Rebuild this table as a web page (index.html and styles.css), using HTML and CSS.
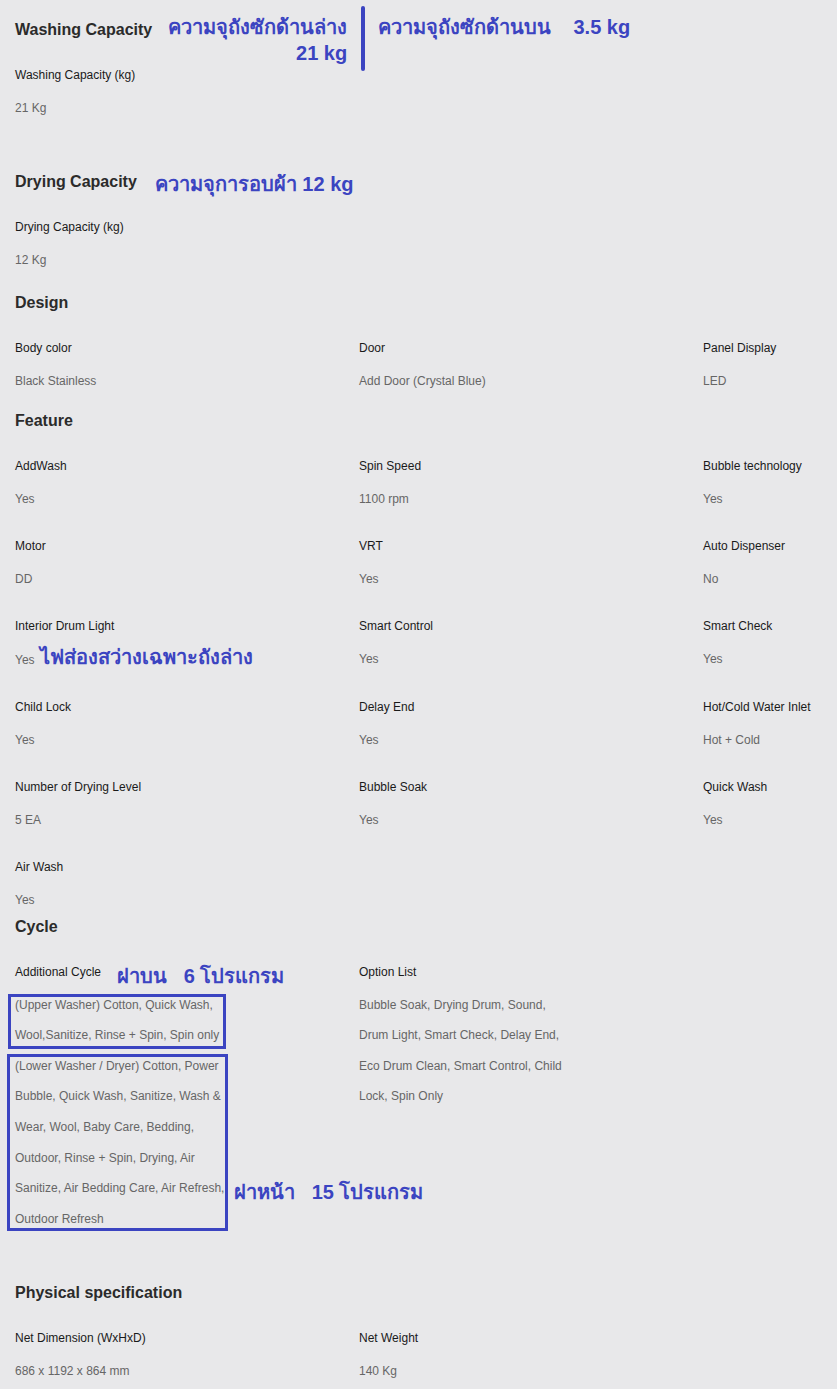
FILE: index.html
```html
<!DOCTYPE html>
<html lang="en">
<head>
<meta charset="utf-8">
<title>Specifications</title>
<link rel="stylesheet" href="styles.css">
</head>
<body>
<div class="page">

  <section class="spec spec--gap-lg">
    <div class="spec-head">
      <h2 class="spec-title">Washing Capacity</h2>
      <div class="note note--stack">ความจุถังซักด้านล่าง<br>21 kg</div>
      <span class="note-bar"></span>
      <div class="note note--upper">ความจุถังซักด้านบน    3.5 kg</div>
    </div>
    <div class="spec-grid">
      <div class="item"><div class="label">Washing Capacity (kg)</div><div class="value">21 Kg</div></div>
    </div>
  </section>

  <section class="spec spec--gap-md">
    <div class="spec-head">
      <h2 class="spec-title">Drying Capacity</h2>
      <div class="note note--dry">ความจุการอบผ้า 12 kg</div>
    </div>
    <div class="spec-grid">
      <div class="item"><div class="label">Drying Capacity (kg)</div><div class="value">12 Kg</div></div>
    </div>
  </section>

  <section class="spec spec--gap-sm">
    <div class="spec-head"><h2 class="spec-title">Design</h2></div>
    <div class="spec-grid">
      <div class="item"><div class="label">Body color</div><div class="value">Black Stainless</div></div>
      <div class="item"><div class="label">Door</div><div class="value">Add Door (Crystal Blue)</div></div>
      <div class="item"><div class="label">Panel Display</div><div class="value">LED</div></div>
    </div>
  </section>

  <section class="spec spec--gap-0">
    <div class="spec-head"><h2 class="spec-title">Feature</h2></div>
    <div class="spec-grid">
      <div class="item"><div class="label">AddWash</div><div class="value">Yes</div></div>
      <div class="item"><div class="label">Spin Speed</div><div class="value">1100 rpm</div></div>
      <div class="item"><div class="label">Bubble technology</div><div class="value">Yes</div></div>
      <div class="item"><div class="label">Motor</div><div class="value">DD</div></div>
      <div class="item"><div class="label">VRT</div><div class="value">Yes</div></div>
      <div class="item"><div class="label">Auto Dispenser</div><div class="value">No</div></div>
      <div class="item"><div class="label">Interior Drum Light</div><div class="value">Yes <span class="note note--inline">ไฟส่องสว่างเฉพาะถังล่าง</span></div></div>
      <div class="item"><div class="label">Smart Control</div><div class="value">Yes</div></div>
      <div class="item"><div class="label">Smart Check</div><div class="value">Yes</div></div>
      <div class="item"><div class="label">Child Lock</div><div class="value">Yes</div></div>
      <div class="item"><div class="label">Delay End</div><div class="value">Yes</div></div>
      <div class="item"><div class="label">Hot/Cold Water Inlet</div><div class="value">Hot + Cold</div></div>
      <div class="item"><div class="label">Number of Drying Level</div><div class="value">5 EA</div></div>
      <div class="item"><div class="label">Bubble Soak</div><div class="value">Yes</div></div>
      <div class="item"><div class="label">Quick Wash</div><div class="value">Yes</div></div>
      <div class="item"><div class="label">Air Wash</div><div class="value">Yes</div></div>
    </div>
  </section>

  <section class="spec spec--gap-cycle">
    <div class="spec-head"><h2 class="spec-title">Cycle</h2></div>
    <div class="spec-grid">
      <div class="item">
        <div class="label label--note">Additional Cycle <span class="note note--label">ฝาบน   6 โปรแกรม</span></div>
        <div class="cycle-box cycle-box--upper">
          <div class="value value--wrap value--upper">(Upper Washer) Cotton, Quick Wash, Wool,Sanitize, Rinse + Spin, Spin only</div>
        </div>
        <div class="cycle-row">
          <div class="cycle-box cycle-box--lower">
            <div class="value value--wrap value--lower">(Lower Washer / Dryer) Cotton, Power Bubble, Quick Wash, Sanitize, Wash &amp; Wear, Wool, Baby Care, Bedding, Outdoor, Rinse + Spin, Drying, Air Sanitize, Air Bedding Care, Air Refresh, Outdoor Refresh</div>
          </div>
          <div class="note note--front">ฝาหน้า   15 โปรแกรม</div>
        </div>
      </div>
      <div class="item"><div class="label">Option List</div><div class="value value--wrap">Bubble Soak, Drying Drum, Sound, Drum Light, Smart Check, Delay End, Eco Drum Clean, Smart Control, Child Lock, Spin Only</div></div>
    </div>
  </section>

  <section class="spec">
    <div class="spec-head"><h2 class="spec-title">Physical specification</h2></div>
    <div class="spec-grid">
      <div class="item"><div class="label">Net Dimension (WxHxD)</div><div class="value">686 x 1192 x 864 mm</div></div>
      <div class="item"><div class="label">Net Weight</div><div class="value">140 Kg</div></div>
    </div>
  </section>

</div>
</body>
</html>
```

FILE: styles.css
```css
html, body {
  margin: 0;
  padding: 0;
  background: #e8e8ea;
}

body {
  font-family: "Liberation Sans", Arial, "Noto Sans", sans-serif;
}

.page {
  padding: 18px 0 20px 15px;
}

.spec-head {
  display: flex;
  align-items: flex-start;
  height: 24px;
  margin-bottom: 23px;
}

.spec-title {
  margin: 0;
  font-size: 16px;
  line-height: 24px;
  font-weight: 700;
  color: #2b2b2b;
  white-space: nowrap;
}

.spec-grid {
  display: grid;
  grid-template-columns: 344px 344px 1fr;
  row-gap: 21.4px;
}

.label {
  font-size: 12px;
  line-height: 20px;
  color: #1a1a1a;
  margin-bottom: 8px;
}

.value {
  font-size: 12px;
  line-height: 30.6px;
  color: #666666;
}

.value--wrap {
  width: 213px;
}

.spec--gap-lg { margin-bottom: 46.4px; }
.spec--gap-md { margin-bottom: 15px; }
.spec--gap-sm { margin-bottom: 13px; }
.spec--gap-0 { margin-bottom: -1px; }
.spec--gap-cycle { margin-bottom: 50px; }

/* annotations */
.note {
  color: #3b44c1;
  font-weight: 700;
  font-size: 20px;
  line-height: 26px;
  white-space: pre;
}

.note--stack {
  width: 182px;
  margin-left: 13px;
  margin-top: -4px;
  text-align: right;
}

.note-bar {
  flex: none;
  width: 4px;
  height: 65px;
  margin-left: 14px;
  margin-top: -12px;
  border-radius: 2px;
  background: #3b44c1;
}

.note--upper {
  margin-left: 13px;
  margin-top: -4px;
}

.note--dry {
  margin-left: 18px;
  margin-top: 1px;
}

.note--inline {
  margin-left: 2px;
}

.label--note {
  display: flex;
  align-items: flex-start;
}

.note--label {
  margin-left: 16px;
  line-height: 20px;
  padding-top: 4px;
  margin-bottom: -4px;
}

.cycle-box {
  border: 3px solid #3b44c1;
  box-sizing: border-box;
  margin-left: -7px;
  padding-left: 4px;
}

/* collapses with the label's 8px bottom margin: box sits 4px below the value line box */
.cycle-box--upper {
  width: 218px;
  margin-top: 12px;
}

.value--upper {
  margin: -7px 0 -5.2px;
}

.cycle-row {
  display: flex;
  align-items: flex-end;
  margin-top: 5px;
}

.cycle-box--lower {
  flex: none;
  width: 221px;
  margin-left: -8px;
  padding-left: 5px;
}

.value--lower {
  margin: -5.8px 0 -6.8px;
}

.note--front {
  margin-left: 6px;
  margin-bottom: 26px;
}
```
